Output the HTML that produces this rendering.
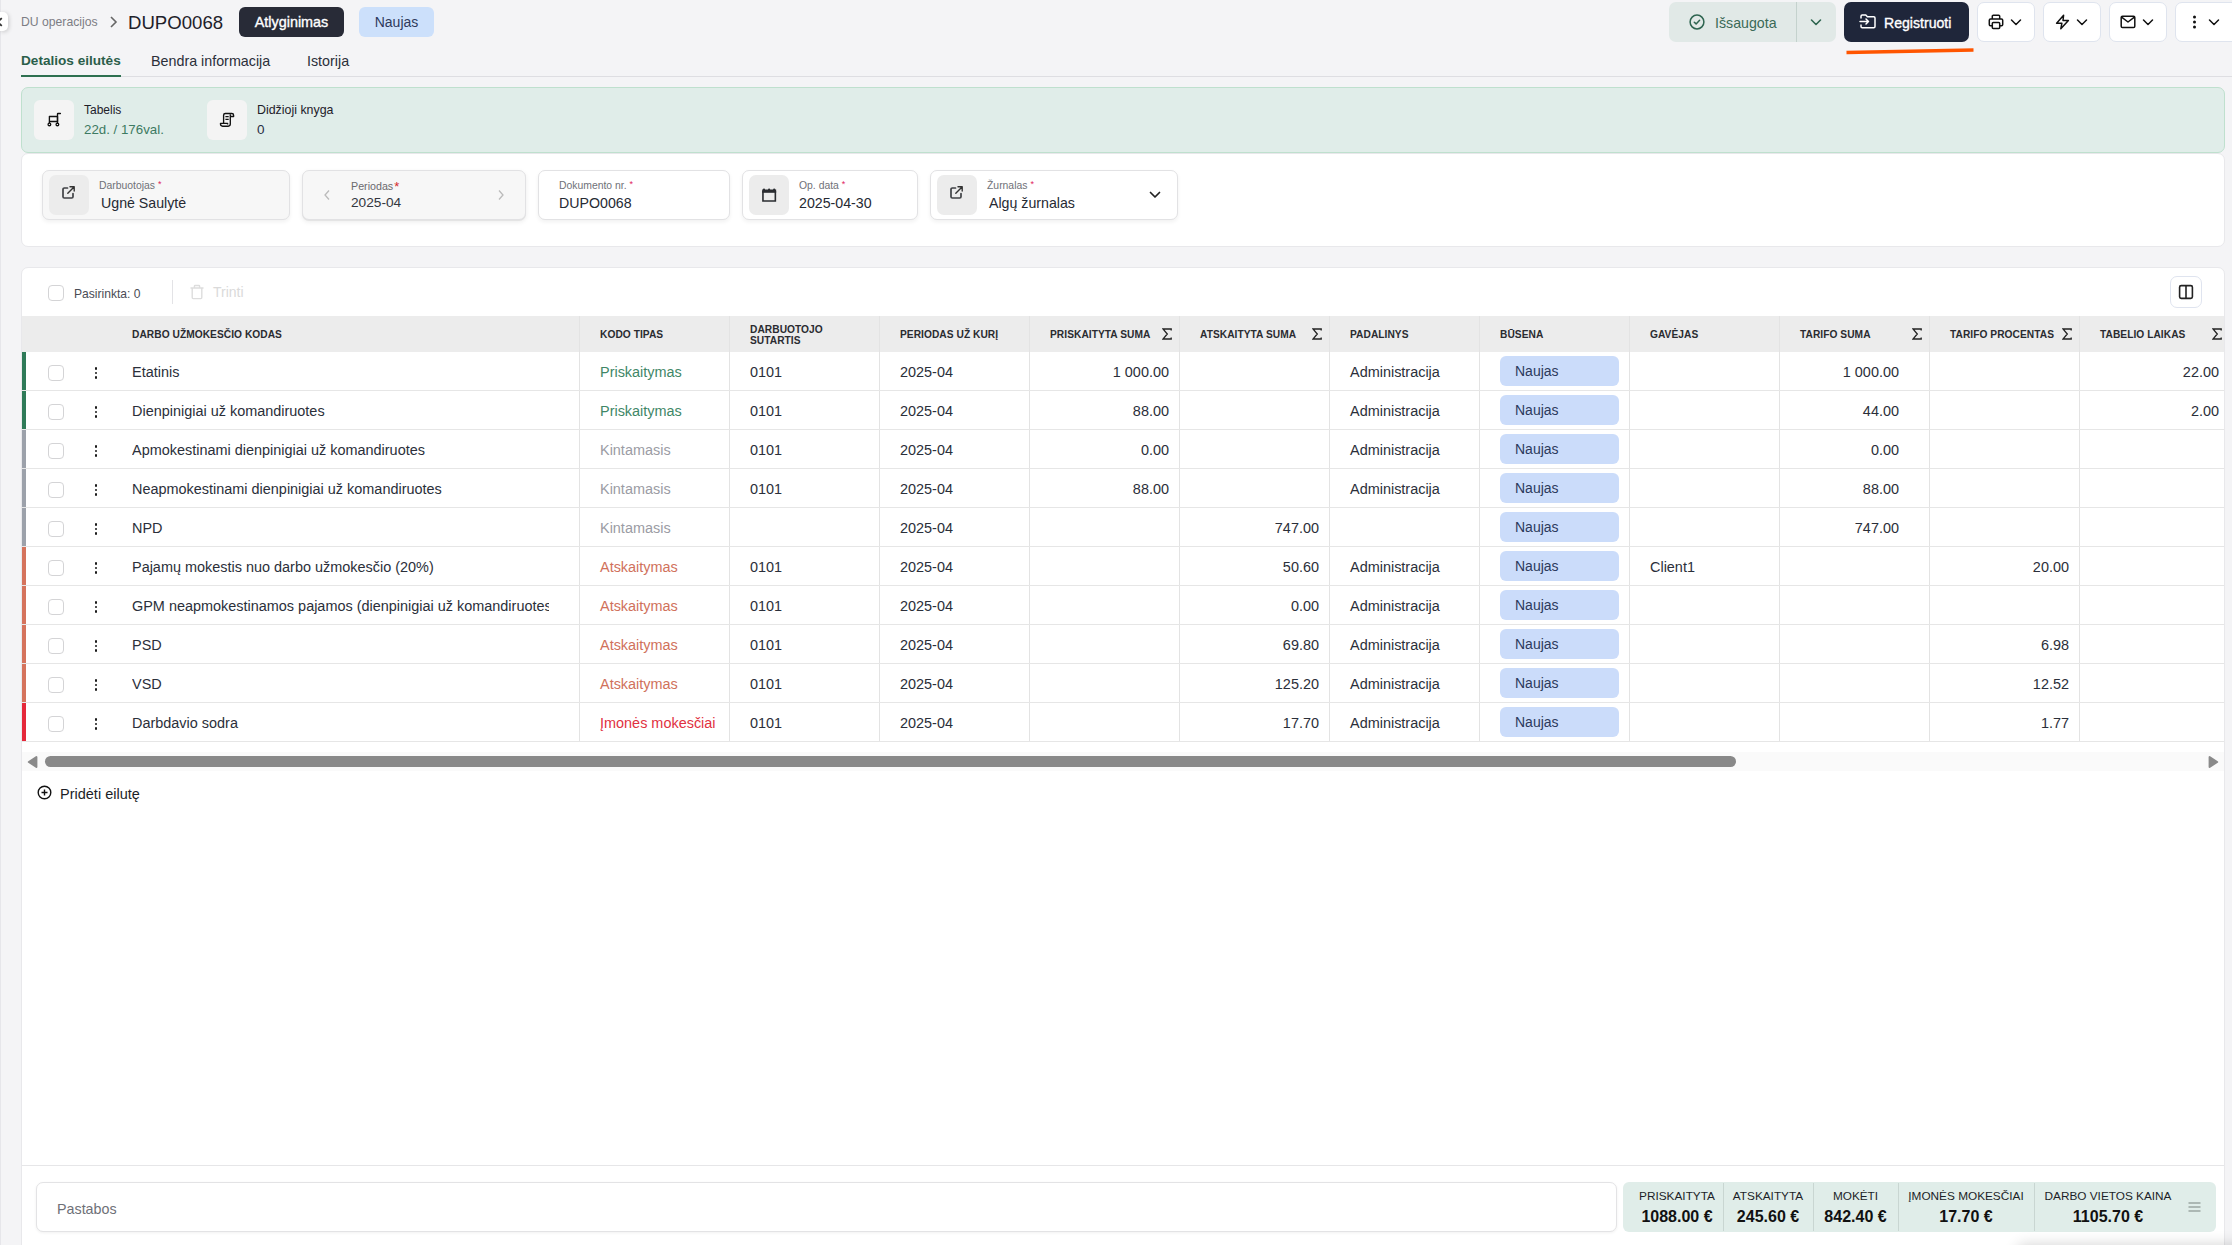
<!DOCTYPE html>
<html><head><meta charset="utf-8">
<style>
*{box-sizing:border-box;margin:0;padding:0}
html,body{width:2232px;height:1245px;overflow:hidden;background:#f4f4f6;font-family:"Liberation Sans",sans-serif;color:#262a33}
.abs{position:absolute}
.t{position:absolute;white-space:nowrap;line-height:1}
svg{display:block}
/* top */
#sidetab{left:0;top:12px;width:8px;height:19px;background:#fff;border-radius:0 5px 5px 0;box-shadow:1px 1px 4px rgba(0,0,0,.18)}
#leftline{left:0;top:0;width:1px;height:1245px;background:#e6e6ea}
.badge{position:absolute;height:30px;border-radius:6px;line-height:30px;text-align:center;white-space:nowrap}
.tab{position:absolute;top:53.6px;font-size:14.3px;line-height:14px;white-space:nowrap;color:#2b2f3a}
.btn{position:absolute;top:2px;height:40px;border-radius:7px;background:#fff;border:1px solid #dfe4ee}
.card{position:absolute;background:#fff;border:1px solid #e8e8eb;border-radius:7px}
.field{position:absolute;top:170px;height:50px;border:1px solid #e2e2e4;border-radius:7px;background:#fff;box-shadow:0 2px 4px rgba(0,0,0,.06)}
.ibox{position:absolute;left:6px;top:4px;width:40px;height:40px;border-radius:7px;background:#ececec}
.flabel{position:absolute;top:9px;font-size:10.4px;line-height:11px;color:#6f7178;white-space:nowrap}
.flabel i{font-style:normal;color:#e0245e;margin-left:3px;font-size:9px;position:relative;top:-2px}
.fval{position:absolute;top:23.5px;font-size:14.2px;line-height:16px;color:#262a33;white-space:nowrap}
/* table */
#thead{position:absolute;left:22px;top:316px;width:2202px;height:36px;background:#ececec;overflow:hidden}
.th{position:absolute;top:0;height:36px;font-size:10.2px;letter-spacing:0.05px;font-weight:bold;color:#2a2b30;line-height:11px;white-space:nowrap}
.th span{position:absolute;top:13px}
.sig{position:absolute;top:11px;font-size:14px;line-height:14px;font-weight:normal}
.vsep{position:absolute;width:1px;background:#e3e3e3}
.row{position:absolute;left:22px;width:2202px;height:39px;border-bottom:1px solid #e6e6e6;overflow:hidden}
.bar{position:absolute;left:0;top:0;width:4px;height:39px}
.cb{position:absolute;width:16px;height:16px;border:1px solid #d4d4d6;border-radius:4px;background:#fff}
.dots{position:absolute;left:72px;top:15px;width:4px;height:14px}
.dots i{position:absolute;left:0;width:2.7px;height:2.7px;border-radius:50%;background:#1a1a1a}
.c{position:absolute;top:11.5px;font-size:14.45px;line-height:16px;white-space:nowrap;color:#2b2f3a}
.r{text-align:right}
.nb{position:absolute;top:4px;width:119px;height:30px;border-radius:6px;background:#cbdcfa;color:#2c3a5c;font-size:14px;line-height:30px;padding-left:15px}
.green{color:#3f8767}.gray{color:#9b9ca4}.orange{color:#d0715b}.red{color:#e1313f}
</style></head><body>
<div id="leftline" class="abs"></div>
<div id="sidetab" class="abs"></div>
<svg class="abs" style="left:0;top:16px" width="6" height="12" viewBox="0 0 6 12"><path d="M1.8 2.2L-2.5 6l4.3 3.8" fill="none" stroke="#333" stroke-width="1.8"/></svg>

<!-- breadcrumb -->
<div class="t" style="left:21px;top:16px;font-size:12.2px;color:#7c7d84">DU operacijos</div>
<svg class="abs" style="left:108px;top:15px" width="10" height="14" viewBox="0 0 10 14"><path d="M3 2l5 5-5 5" fill="none" stroke="#666" stroke-width="1.6"/></svg>
<div class="t" style="left:128px;top:14px;font-size:18.6px;color:#1e212a">DUPO0068</div>
<div class="badge" style="left:239px;top:7px;width:105px;background:#282b37;color:#fff;font-size:14.4px;line-height:31px;-webkit-text-stroke:0.35px #fff">Atlyginimas</div>
<div class="badge" style="left:359px;top:7px;width:75px;background:#cce0fb;color:#2e3a5c;font-size:14px">Naujas</div>

<!-- tabs -->
<div class="tab" style="left:21px;font-weight:bold;font-size:13.6px;color:#2b5e4a">Detalios eilutės</div>
<div class="tab" style="left:151px">Bendra informacija</div>
<div class="tab" style="left:307px">Istorija</div>
<div class="abs" style="left:21px;top:76px;width:2211px;height:1px;background:#dedee2"></div>
<div class="abs" style="left:21px;top:75px;width:100px;height:2px;background:#2e7050"></div>


<!-- top right buttons -->
<div class="abs" style="left:1669px;top:2px;width:167px;height:40px;border-radius:7px;background:#e1e9e7"></div>
<div class="abs" style="left:1796px;top:2px;width:1px;height:40px;background:#c4d2cd"></div>
<svg class="abs" style="left:1689px;top:14px" width="16" height="16" viewBox="0 0 16 16"><circle cx="8" cy="8" r="6.9" fill="none" stroke="#2e6550" stroke-width="1.5"/><path d="M5.3 8.2l1.8 1.7 3.5-3.6" fill="none" stroke="#2e6550" stroke-width="1.5" stroke-linecap="round" stroke-linejoin="round"/></svg>
<div class="t" style="left:1715px;top:16px;font-size:14.2px;color:#3b6a57">Išsaugota</div>
<svg class="abs" style="left:1810px;top:18px" width="12" height="9" viewBox="0 0 12 9"><path d="M1.5 2l4.5 4.5 4.5-4.5" fill="none" stroke="#2e6550" stroke-width="1.6" stroke-linecap="round" stroke-linejoin="round"/></svg>

<div class="abs" style="left:1844px;top:2px;width:125px;height:40px;border-radius:7px;background:#1f263a"></div>
<svg class="abs" style="left:1859px;top:14px" width="18" height="15" viewBox="0 0 18 15"><path d="M2 4.5V2.2c0-.7.5-1.2 1.2-1.2h3.6l1.6 1.7h6.4c.7 0 1.2.5 1.2 1.2v8.7c0 .7-.5 1.2-1.2 1.2H3.2c-.7 0-1.2-.5-1.2-1.2V10.5" fill="none" stroke="#fff" stroke-width="1.5" stroke-linejoin="round"/><path d="M1 7.5h8.5M7 5l2.5 2.5L7 10" fill="none" stroke="#fff" stroke-width="1.5" stroke-linecap="round" stroke-linejoin="round"/></svg>
<div class="t" style="left:1884px;top:16px;font-size:14.1px;color:#fff;-webkit-text-stroke:0.35px #fff">Registruoti</div>
<svg class="abs" style="left:1844px;top:46px" width="132" height="10" viewBox="0 0 132 10"><path d="M2.5 6.5L129.5 4" fill="none" stroke="#ff5500" stroke-width="3.6" stroke-linecap="butt"/></svg>

<div class="btn" style="left:1977px;width:58px"></div>
<div class="btn" style="left:2043px;width:58px"></div>
<div class="btn" style="left:2109px;width:58px"></div>
<div class="btn" style="left:2175px;width:70px"></div>
<svg class="abs" style="left:1988px;top:14px" width="16" height="16" viewBox="0 0 16 16"><path d="M4.3 5V2.3c0-.6.4-1 1-1h5.4c.6 0 1 .4 1 1V5" fill="none" stroke="#111" stroke-width="1.5"/><path d="M4.2 11.7H2.4c-.6 0-1.1-.5-1.1-1.1V6.3c0-.7.6-1.3 1.3-1.3h10.8c.7 0 1.3.6 1.3 1.3v4.3c0 .6-.5 1.1-1.1 1.1h-1.8" fill="none" stroke="#111" stroke-width="1.5"/><rect x="4.3" y="8.6" width="7.4" height="5.9" rx="1" fill="none" stroke="#111" stroke-width="1.5"/></svg>
<svg class="abs" style="left:2055px;top:14px" width="15" height="16" viewBox="0 0 15 16"><path d="M8.6 1.2L1.6 9.2h5.3L5.8 14.8l7.6-8.3H8z" fill="none" stroke="#111" stroke-width="1.5" stroke-linejoin="round"/></svg>
<svg class="abs" style="left:2120px;top:15px" width="16" height="14" viewBox="0 0 16 14"><rect x="1.2" y="1.2" width="13.6" height="11.4" rx="1.3" fill="none" stroke="#111" stroke-width="1.5"/><path d="M1.6 2.2l6.4 4.8 6.4-4.8" fill="none" stroke="#111" stroke-width="1.5" stroke-linejoin="round"/></svg>
<svg class="abs" style="left:2192px;top:15px" width="5" height="14" viewBox="0 0 5 14"><circle cx="2.5" cy="2" r="1.5" fill="#111"/><circle cx="2.5" cy="7" r="1.5" fill="#111"/><circle cx="2.5" cy="12" r="1.5" fill="#111"/></svg>
<svg class="abs" style="left:2010px;top:17.5px" width="12" height="9" viewBox="0 0 12 9"><path d="M1.5 2l4.5 4.5 4.5-4.5" fill="none" stroke="#111" stroke-width="1.5" stroke-linecap="round" stroke-linejoin="round"/></svg>
<svg class="abs" style="left:2076px;top:17.5px" width="12" height="9" viewBox="0 0 12 9"><path d="M1.5 2l4.5 4.5 4.5-4.5" fill="none" stroke="#111" stroke-width="1.5" stroke-linecap="round" stroke-linejoin="round"/></svg>
<svg class="abs" style="left:2142px;top:17.5px" width="12" height="9" viewBox="0 0 12 9"><path d="M1.5 2l4.5 4.5 4.5-4.5" fill="none" stroke="#111" stroke-width="1.5" stroke-linecap="round" stroke-linejoin="round"/></svg>
<svg class="abs" style="left:2208px;top:17.5px" width="12" height="9" viewBox="0 0 12 9"><path d="M1.5 2l4.5 4.5 4.5-4.5" fill="none" stroke="#111" stroke-width="1.5" stroke-linecap="round" stroke-linejoin="round"/></svg>

<!-- info card -->
<div class="abs" style="left:21px;top:87px;width:2204px;height:66px;background:#e0ede9;border:1px solid #bfe0ce;border-radius:7px"></div>
<div class="abs" style="left:34px;top:100px;width:40px;height:40px;background:#f4f4f4;border-radius:6px"></div>
<svg class="abs" style="left:46px;top:112px" width="16" height="16" viewBox="0 0 16 16"><path d="M14.4 1.5h-2.4c-.3 0-.5.2-.5.5V11.2" fill="none" stroke="#111" stroke-width="1.35" stroke-linecap="round" stroke-linejoin="round"/><path d="M3.4 4.5h8.1v5H3.4zM3.4 9.5v1.6" fill="none" stroke="#111" stroke-width="1.35" stroke-linejoin="round"/><circle cx="3.4" cy="12.4" r="1.35" fill="none" stroke="#111" stroke-width="1.3"/><circle cx="11.4" cy="12.4" r="1.35" fill="none" stroke="#111" stroke-width="1.3"/></svg>
<div class="t" style="left:84px;top:104px;font-size:12px;color:#1e2029">Tabelis</div>
<div class="t" style="left:84px;top:122.5px;font-size:13.3px;color:#3d7a62">22d. / 176val.</div>
<div class="abs" style="left:207px;top:100px;width:40px;height:40px;background:#f4f4f4;border-radius:6px"></div>
<svg class="abs" style="left:219px;top:111px" width="16" height="17" viewBox="0 0 16 17"><path d="M4.6 12.3V4.3c0-1 .8-1.8 1.8-1.8h6.4c1 0 1.8.8 1.8 1.8v1.2h-3.2" fill="none" stroke="#111" stroke-width="1.35" stroke-linejoin="round"/><path d="M11.3 3.3v9.8c0 1.1-.9 2.1-2.1 2.1H3.6c-1.1 0-2.1-.9-2.1-2.1v-.8h7.1v1.3" fill="none" stroke="#111" stroke-width="1.35" stroke-linejoin="round"/><path d="M6.4 5.6h3.3M6.4 8.3h3.3" stroke="#111" stroke-width="1.3"/></svg>
<div class="t" style="left:257px;top:104px;font-size:12.4px;color:#1e2029">Didžioji knyga</div>
<div class="t" style="left:257px;top:122.5px;font-size:13.5px;color:#2a2f45">0</div>

<!-- fields card -->
<div class="card" style="left:21px;top:153px;width:2204px;height:94px"></div>
<div class="field" style="left:42px;width:248px;background:#f7f7f7">
  <div class="ibox"></div>
  <svg class="abs" style="left:18px;top:14px" width="15" height="15" viewBox="0 0 15 15"><path d="M6.5 3H3.3C2.6 3 2 3.6 2 4.3v7.4c0 .7.6 1.3 1.3 1.3h7.4c.7 0 1.3-.6 1.3-1.3V8.5" fill="none" stroke="#404246" stroke-width="1.7" stroke-linecap="round"/><path d="M6.8 8.2l6.2-6.2M9 1.8h4.2V6" fill="none" stroke="#333" stroke-width="1.4" stroke-linecap="round" stroke-linejoin="round"/></svg>
  <div class="flabel" style="left:56px">Darbuotojas<i>*</i></div>
  <div class="fval" style="left:58px">Ugnė Saulytė</div>
</div>
<div class="field" style="left:302px;width:224px;background:#f7f7f7;box-shadow:0 1px 0 #e4e4e4,0 2px 5px rgba(0,0,0,.08)">
  <svg class="abs" style="left:20px;top:18px" width="8" height="12" viewBox="0 0 8 12"><path d="M6 1.5L2 6l4 4.5" fill="none" stroke="#bbb" stroke-width="1.3"/></svg>
  <svg class="abs" style="left:194px;top:18px" width="8" height="12" viewBox="0 0 8 12"><path d="M2 1.5L6 6l-4 4.5" fill="none" stroke="#bbb" stroke-width="1.3"/></svg>
  <div class="flabel" style="left:48px;font-size:10.7px;color:#6a6a6e">Periodas<i style="color:#d42a2a;font-size:13px;margin-left:1px;position:relative;top:1px">*</i></div>
  <div class="fval" style="left:48px;font-size:13.7px;color:#33363e">2025-04</div>
</div>
<div class="field" style="left:538px;width:192px">
  <div class="flabel" style="left:20px">Dokumento nr.<i>*</i></div>
  <div class="fval" style="left:20px">DUPO0068</div>
</div>
<div class="field" style="left:742px;width:176px">
  <div class="ibox"></div>
  <svg class="abs" style="left:19px;top:17px" width="16" height="16" viewBox="0 0 16 16"><path d="M0.95 3v10.05h12.4V3" fill="none" stroke="#2a2c30" stroke-width="1.6"/><rect x="0.15" y="1.5" width="14" height="3.3" fill="#2a2c30"/><circle cx="2" cy="1.6" r="1.1" fill="#2a2c30"/><circle cx="7.1" cy="1.6" r="1.1" fill="#2a2c30"/><circle cx="12.2" cy="1.6" r="1.1" fill="#2a2c30"/></svg>
  <div class="flabel" style="left:56px">Op. data<i>*</i></div>
  <div class="fval" style="left:56px">2025-04-30</div>
</div>
<div class="field" style="left:930px;width:248px">
  <div class="ibox"></div>
  <svg class="abs" style="left:18px;top:14px" width="15" height="15" viewBox="0 0 15 15"><path d="M6.5 3H3.3C2.6 3 2 3.6 2 4.3v7.4c0 .7.6 1.3 1.3 1.3h7.4c.7 0 1.3-.6 1.3-1.3V8.5" fill="none" stroke="#404246" stroke-width="1.7" stroke-linecap="round"/><path d="M6.8 8.2l6.2-6.2M9 1.8h4.2V6" fill="none" stroke="#333" stroke-width="1.4" stroke-linecap="round" stroke-linejoin="round"/></svg>
  <div class="flabel" style="left:56px">Žurnalas<i>*</i></div>
  <div class="fval" style="left:58px">Algų žurnalas</div>
  <svg class="abs" style="left:218px;top:20px" width="12" height="8" viewBox="0 0 12 8"><path d="M1.5 1.5L6 6l4.5-4.5" fill="none" stroke="#222" stroke-width="1.7" stroke-linecap="round" stroke-linejoin="round"/></svg>
</div>
<!-- table card -->
<div class="card" style="left:21px;top:267px;width:2204px;height:1000px;border-radius:7px 7px 0 0"></div>
<div class="cb" style="left:48px;top:285px"></div>
<div class="t" style="left:74px;top:288px;font-size:12.1px;color:#4a4c55">Pasirinkta: 0</div>
<div class="abs" style="left:172px;top:280px;width:1px;height:24px;background:#e3e3e6"></div>
<svg class="abs" style="left:190px;top:284px" width="14" height="16" viewBox="0 0 14 16"><path d="M0.5 4h13M2.2 4v9.6c0 .6.4 1 1 1h7.6c.6 0 1-.4 1-1V4M4.4 4V2.2c0-.4.3-.7.7-.7h3.8c.4 0 .7.3.7.7V4" fill="none" stroke="#dddddd" stroke-width="1.4" stroke-linejoin="round"/></svg>
<div class="t" style="left:213px;top:285px;font-size:14px;color:#dadada">Trinti</div>
<div class="abs" style="left:2170px;top:276px;width:32px;height:32px;border:1px solid #dfe4ef;border-radius:7px;background:#fff"></div>
<svg class="abs" style="left:2178px;top:284px" width="16" height="16" viewBox="0 0 16 16"><rect x="1.6" y="1.6" width="12.8" height="12.8" rx="1.6" fill="none" stroke="#222" stroke-width="1.6"/><path d="M8 1.6v12.8" stroke="#222" stroke-width="1.6"/></svg>
<div id="thead">
<div class="th" style="left:110px"><span>DARBO UŽMOKESČIO KODAS</span></div>
<div class="th" style="left:578px"><span>KODO TIPAS</span></div>
<div class="th" style="left:728px"><span style="top:9px;line-height:10.8px">DARBUOTOJO<br>SUTARTIS</span></div>
<div class="th" style="left:878px"><span>PERIODAS UŽ KURĮ</span></div>
<div class="th" style="left:1028px"><span>PRISKAITYTA SUMA</span></div>
<svg class="abs" style="left:1140px;top:12px" width="10" height="12" viewBox="0 0 10 12"><path d="M9.2 2.6V1H1l4.3 5L1 11h8.2V9.4" fill="none" stroke="#222" stroke-width="1.3" stroke-linejoin="miter"/></svg>
<div class="th" style="left:1178px"><span>ATSKAITYTA SUMA</span></div>
<svg class="abs" style="left:1290px;top:12px" width="10" height="12" viewBox="0 0 10 12"><path d="M9.2 2.6V1H1l4.3 5L1 11h8.2V9.4" fill="none" stroke="#222" stroke-width="1.3" stroke-linejoin="miter"/></svg>
<div class="th" style="left:1328px"><span>PADALINYS</span></div>
<div class="th" style="left:1478px"><span>BŪSENA</span></div>
<div class="th" style="left:1628px"><span>GAVĖJAS</span></div>
<div class="th" style="left:1778px"><span>TARIFO SUMA</span></div>
<svg class="abs" style="left:1890px;top:12px" width="10" height="12" viewBox="0 0 10 12"><path d="M9.2 2.6V1H1l4.3 5L1 11h8.2V9.4" fill="none" stroke="#222" stroke-width="1.3" stroke-linejoin="miter"/></svg>
<div class="th" style="left:1928px"><span>TARIFO PROCENTAS</span></div>
<svg class="abs" style="left:2040px;top:12px" width="10" height="12" viewBox="0 0 10 12"><path d="M9.2 2.6V1H1l4.3 5L1 11h8.2V9.4" fill="none" stroke="#222" stroke-width="1.3" stroke-linejoin="miter"/></svg>
<div class="th" style="left:2078px"><span>TABELIO LAIKAS</span></div>
<svg class="abs" style="left:2190px;top:12px" width="10" height="12" viewBox="0 0 10 12"><path d="M9.2 2.6V1H1l4.3 5L1 11h8.2V9.4" fill="none" stroke="#222" stroke-width="1.3" stroke-linejoin="miter"/></svg>
<div class="vsep" style="left:557px;top:0;height:36px"></div>
<div class="vsep" style="left:707px;top:0;height:36px"></div>
<div class="vsep" style="left:857px;top:0;height:36px"></div>
<div class="vsep" style="left:1007px;top:0;height:36px"></div>
<div class="vsep" style="left:1157px;top:0;height:36px"></div>
<div class="vsep" style="left:1307px;top:0;height:36px"></div>
<div class="vsep" style="left:1457px;top:0;height:36px"></div>
<div class="vsep" style="left:1607px;top:0;height:36px"></div>
<div class="vsep" style="left:1757px;top:0;height:36px"></div>
<div class="vsep" style="left:1907px;top:0;height:36px"></div>
<div class="vsep" style="left:2057px;top:0;height:36px"></div>
</div>
<div class="row" style="top:352px"><div class="bar" style="background:#2f7a58"></div><div class="cb" style="left:26px;top:13px"></div><div class="dots" style="left:72.7px"><i style="top:0"></i><i style="top:4.6px"></i><i style="top:9.2px"></i></div><div class="c" style="left:110px;width:417px;overflow:hidden">Etatinis</div><div class="c green" style="left:578px">Priskaitymas</div><div class="c" style="left:728px">0101</div><div class="c" style="left:878px">2025-04</div><div class="c r" style="left:1017px;width:130px">1 000.00</div><div class="c" style="left:1328px">Administracija</div><div class="nb" style="left:1478px">Naujas</div><div class="c r" style="left:1747px;width:130px">1 000.00</div><div class="c r" style="left:2057px;width:140px">22.00</div><div class="vsep" style="left:557px;top:0;height:39px"></div><div class="vsep" style="left:707px;top:0;height:39px"></div><div class="vsep" style="left:857px;top:0;height:39px"></div><div class="vsep" style="left:1007px;top:0;height:39px"></div><div class="vsep" style="left:1157px;top:0;height:39px"></div><div class="vsep" style="left:1307px;top:0;height:39px"></div><div class="vsep" style="left:1457px;top:0;height:39px"></div><div class="vsep" style="left:1607px;top:0;height:39px"></div><div class="vsep" style="left:1757px;top:0;height:39px"></div><div class="vsep" style="left:1907px;top:0;height:39px"></div><div class="vsep" style="left:2057px;top:0;height:39px"></div></div>
<div class="row" style="top:391px"><div class="bar" style="background:#2f7a58"></div><div class="cb" style="left:26px;top:13px"></div><div class="dots" style="left:72.7px"><i style="top:0"></i><i style="top:4.6px"></i><i style="top:9.2px"></i></div><div class="c" style="left:110px;width:417px;overflow:hidden">Dienpinigiai už komandiruotes</div><div class="c green" style="left:578px">Priskaitymas</div><div class="c" style="left:728px">0101</div><div class="c" style="left:878px">2025-04</div><div class="c r" style="left:1017px;width:130px">88.00</div><div class="c" style="left:1328px">Administracija</div><div class="nb" style="left:1478px">Naujas</div><div class="c r" style="left:1747px;width:130px">44.00</div><div class="c r" style="left:2057px;width:140px">2.00</div><div class="vsep" style="left:557px;top:0;height:39px"></div><div class="vsep" style="left:707px;top:0;height:39px"></div><div class="vsep" style="left:857px;top:0;height:39px"></div><div class="vsep" style="left:1007px;top:0;height:39px"></div><div class="vsep" style="left:1157px;top:0;height:39px"></div><div class="vsep" style="left:1307px;top:0;height:39px"></div><div class="vsep" style="left:1457px;top:0;height:39px"></div><div class="vsep" style="left:1607px;top:0;height:39px"></div><div class="vsep" style="left:1757px;top:0;height:39px"></div><div class="vsep" style="left:1907px;top:0;height:39px"></div><div class="vsep" style="left:2057px;top:0;height:39px"></div></div>
<div class="row" style="top:430px"><div class="bar" style="background:#9ca1aa"></div><div class="cb" style="left:26px;top:13px"></div><div class="dots" style="left:72.7px"><i style="top:0"></i><i style="top:4.6px"></i><i style="top:9.2px"></i></div><div class="c" style="left:110px;width:417px;overflow:hidden">Apmokestinami dienpinigiai už komandiruotes</div><div class="c gray" style="left:578px">Kintamasis</div><div class="c" style="left:728px">0101</div><div class="c" style="left:878px">2025-04</div><div class="c r" style="left:1017px;width:130px">0.00</div><div class="c" style="left:1328px">Administracija</div><div class="nb" style="left:1478px">Naujas</div><div class="c r" style="left:1747px;width:130px">0.00</div><div class="vsep" style="left:557px;top:0;height:39px"></div><div class="vsep" style="left:707px;top:0;height:39px"></div><div class="vsep" style="left:857px;top:0;height:39px"></div><div class="vsep" style="left:1007px;top:0;height:39px"></div><div class="vsep" style="left:1157px;top:0;height:39px"></div><div class="vsep" style="left:1307px;top:0;height:39px"></div><div class="vsep" style="left:1457px;top:0;height:39px"></div><div class="vsep" style="left:1607px;top:0;height:39px"></div><div class="vsep" style="left:1757px;top:0;height:39px"></div><div class="vsep" style="left:1907px;top:0;height:39px"></div><div class="vsep" style="left:2057px;top:0;height:39px"></div></div>
<div class="row" style="top:469px"><div class="bar" style="background:#9ca1aa"></div><div class="cb" style="left:26px;top:13px"></div><div class="dots" style="left:72.7px"><i style="top:0"></i><i style="top:4.6px"></i><i style="top:9.2px"></i></div><div class="c" style="left:110px;width:417px;overflow:hidden">Neapmokestinami dienpinigiai už komandiruotes</div><div class="c gray" style="left:578px">Kintamasis</div><div class="c" style="left:728px">0101</div><div class="c" style="left:878px">2025-04</div><div class="c r" style="left:1017px;width:130px">88.00</div><div class="c" style="left:1328px">Administracija</div><div class="nb" style="left:1478px">Naujas</div><div class="c r" style="left:1747px;width:130px">88.00</div><div class="vsep" style="left:557px;top:0;height:39px"></div><div class="vsep" style="left:707px;top:0;height:39px"></div><div class="vsep" style="left:857px;top:0;height:39px"></div><div class="vsep" style="left:1007px;top:0;height:39px"></div><div class="vsep" style="left:1157px;top:0;height:39px"></div><div class="vsep" style="left:1307px;top:0;height:39px"></div><div class="vsep" style="left:1457px;top:0;height:39px"></div><div class="vsep" style="left:1607px;top:0;height:39px"></div><div class="vsep" style="left:1757px;top:0;height:39px"></div><div class="vsep" style="left:1907px;top:0;height:39px"></div><div class="vsep" style="left:2057px;top:0;height:39px"></div></div>
<div class="row" style="top:508px"><div class="bar" style="background:#9ca1aa"></div><div class="cb" style="left:26px;top:13px"></div><div class="dots" style="left:72.7px"><i style="top:0"></i><i style="top:4.6px"></i><i style="top:9.2px"></i></div><div class="c" style="left:110px;width:417px;overflow:hidden">NPD</div><div class="c gray" style="left:578px">Kintamasis</div><div class="c" style="left:878px">2025-04</div><div class="c r" style="left:1167px;width:130px">747.00</div><div class="nb" style="left:1478px">Naujas</div><div class="c r" style="left:1747px;width:130px">747.00</div><div class="vsep" style="left:557px;top:0;height:39px"></div><div class="vsep" style="left:707px;top:0;height:39px"></div><div class="vsep" style="left:857px;top:0;height:39px"></div><div class="vsep" style="left:1007px;top:0;height:39px"></div><div class="vsep" style="left:1157px;top:0;height:39px"></div><div class="vsep" style="left:1307px;top:0;height:39px"></div><div class="vsep" style="left:1457px;top:0;height:39px"></div><div class="vsep" style="left:1607px;top:0;height:39px"></div><div class="vsep" style="left:1757px;top:0;height:39px"></div><div class="vsep" style="left:1907px;top:0;height:39px"></div><div class="vsep" style="left:2057px;top:0;height:39px"></div></div>
<div class="row" style="top:547px"><div class="bar" style="background:#d5735c"></div><div class="cb" style="left:26px;top:13px"></div><div class="dots" style="left:72.7px"><i style="top:0"></i><i style="top:4.6px"></i><i style="top:9.2px"></i></div><div class="c" style="left:110px;width:417px;overflow:hidden">Pajamų mokestis nuo darbo užmokesčio (20%)</div><div class="c orange" style="left:578px">Atskaitymas</div><div class="c" style="left:728px">0101</div><div class="c" style="left:878px">2025-04</div><div class="c r" style="left:1167px;width:130px">50.60</div><div class="c" style="left:1328px">Administracija</div><div class="nb" style="left:1478px">Naujas</div><div class="c" style="left:1628px">Client1</div><div class="c r" style="left:1917px;width:130px">20.00</div><div class="vsep" style="left:557px;top:0;height:39px"></div><div class="vsep" style="left:707px;top:0;height:39px"></div><div class="vsep" style="left:857px;top:0;height:39px"></div><div class="vsep" style="left:1007px;top:0;height:39px"></div><div class="vsep" style="left:1157px;top:0;height:39px"></div><div class="vsep" style="left:1307px;top:0;height:39px"></div><div class="vsep" style="left:1457px;top:0;height:39px"></div><div class="vsep" style="left:1607px;top:0;height:39px"></div><div class="vsep" style="left:1757px;top:0;height:39px"></div><div class="vsep" style="left:1907px;top:0;height:39px"></div><div class="vsep" style="left:2057px;top:0;height:39px"></div></div>
<div class="row" style="top:586px"><div class="bar" style="background:#d5735c"></div><div class="cb" style="left:26px;top:13px"></div><div class="dots" style="left:72.7px"><i style="top:0"></i><i style="top:4.6px"></i><i style="top:9.2px"></i></div><div class="c" style="left:110px;width:417px;overflow:hidden">GPM neapmokestinamos pajamos (dienpinigiai už komandiruotes)</div><div class="c orange" style="left:578px">Atskaitymas</div><div class="c" style="left:728px">0101</div><div class="c" style="left:878px">2025-04</div><div class="c r" style="left:1167px;width:130px">0.00</div><div class="c" style="left:1328px">Administracija</div><div class="nb" style="left:1478px">Naujas</div><div class="vsep" style="left:557px;top:0;height:39px"></div><div class="vsep" style="left:707px;top:0;height:39px"></div><div class="vsep" style="left:857px;top:0;height:39px"></div><div class="vsep" style="left:1007px;top:0;height:39px"></div><div class="vsep" style="left:1157px;top:0;height:39px"></div><div class="vsep" style="left:1307px;top:0;height:39px"></div><div class="vsep" style="left:1457px;top:0;height:39px"></div><div class="vsep" style="left:1607px;top:0;height:39px"></div><div class="vsep" style="left:1757px;top:0;height:39px"></div><div class="vsep" style="left:1907px;top:0;height:39px"></div><div class="vsep" style="left:2057px;top:0;height:39px"></div></div>
<div class="row" style="top:625px"><div class="bar" style="background:#d5735c"></div><div class="cb" style="left:26px;top:13px"></div><div class="dots" style="left:72.7px"><i style="top:0"></i><i style="top:4.6px"></i><i style="top:9.2px"></i></div><div class="c" style="left:110px;width:417px;overflow:hidden">PSD</div><div class="c orange" style="left:578px">Atskaitymas</div><div class="c" style="left:728px">0101</div><div class="c" style="left:878px">2025-04</div><div class="c r" style="left:1167px;width:130px">69.80</div><div class="c" style="left:1328px">Administracija</div><div class="nb" style="left:1478px">Naujas</div><div class="c r" style="left:1917px;width:130px">6.98</div><div class="vsep" style="left:557px;top:0;height:39px"></div><div class="vsep" style="left:707px;top:0;height:39px"></div><div class="vsep" style="left:857px;top:0;height:39px"></div><div class="vsep" style="left:1007px;top:0;height:39px"></div><div class="vsep" style="left:1157px;top:0;height:39px"></div><div class="vsep" style="left:1307px;top:0;height:39px"></div><div class="vsep" style="left:1457px;top:0;height:39px"></div><div class="vsep" style="left:1607px;top:0;height:39px"></div><div class="vsep" style="left:1757px;top:0;height:39px"></div><div class="vsep" style="left:1907px;top:0;height:39px"></div><div class="vsep" style="left:2057px;top:0;height:39px"></div></div>
<div class="row" style="top:664px"><div class="bar" style="background:#d5735c"></div><div class="cb" style="left:26px;top:13px"></div><div class="dots" style="left:72.7px"><i style="top:0"></i><i style="top:4.6px"></i><i style="top:9.2px"></i></div><div class="c" style="left:110px;width:417px;overflow:hidden">VSD</div><div class="c orange" style="left:578px">Atskaitymas</div><div class="c" style="left:728px">0101</div><div class="c" style="left:878px">2025-04</div><div class="c r" style="left:1167px;width:130px">125.20</div><div class="c" style="left:1328px">Administracija</div><div class="nb" style="left:1478px">Naujas</div><div class="c r" style="left:1917px;width:130px">12.52</div><div class="vsep" style="left:557px;top:0;height:39px"></div><div class="vsep" style="left:707px;top:0;height:39px"></div><div class="vsep" style="left:857px;top:0;height:39px"></div><div class="vsep" style="left:1007px;top:0;height:39px"></div><div class="vsep" style="left:1157px;top:0;height:39px"></div><div class="vsep" style="left:1307px;top:0;height:39px"></div><div class="vsep" style="left:1457px;top:0;height:39px"></div><div class="vsep" style="left:1607px;top:0;height:39px"></div><div class="vsep" style="left:1757px;top:0;height:39px"></div><div class="vsep" style="left:1907px;top:0;height:39px"></div><div class="vsep" style="left:2057px;top:0;height:39px"></div></div>
<div class="row" style="top:703px"><div class="bar" style="background:#e5283a"></div><div class="cb" style="left:26px;top:13px"></div><div class="dots" style="left:72.7px"><i style="top:0"></i><i style="top:4.6px"></i><i style="top:9.2px"></i></div><div class="c" style="left:110px;width:417px;overflow:hidden">Darbdavio sodra</div><div class="c red" style="left:578px">Įmonės mokesčiai</div><div class="c" style="left:728px">0101</div><div class="c" style="left:878px">2025-04</div><div class="c r" style="left:1167px;width:130px">17.70</div><div class="c" style="left:1328px">Administracija</div><div class="nb" style="left:1478px">Naujas</div><div class="c r" style="left:1917px;width:130px">1.77</div><div class="vsep" style="left:557px;top:0;height:39px"></div><div class="vsep" style="left:707px;top:0;height:39px"></div><div class="vsep" style="left:857px;top:0;height:39px"></div><div class="vsep" style="left:1007px;top:0;height:39px"></div><div class="vsep" style="left:1157px;top:0;height:39px"></div><div class="vsep" style="left:1307px;top:0;height:39px"></div><div class="vsep" style="left:1457px;top:0;height:39px"></div><div class="vsep" style="left:1607px;top:0;height:39px"></div><div class="vsep" style="left:1757px;top:0;height:39px"></div><div class="vsep" style="left:1907px;top:0;height:39px"></div><div class="vsep" style="left:2057px;top:0;height:39px"></div></div>
<div class="abs" style="left:22px;top:752px;width:2202px;height:19px;background:#fafafa"></div>
<svg class="abs" style="left:27px;top:755px" width="11" height="14" viewBox="0 0 11 14"><path d="M9.4 2v10L1.8 7z" fill="#8a8a8a" stroke="#8a8a8a" stroke-width="2" stroke-linejoin="round"/></svg>
<div class="abs" style="left:45px;top:756px;width:1691px;height:11px;border-radius:6px;background:#898989"></div>
<svg class="abs" style="left:2208px;top:755px" width="11" height="14" viewBox="0 0 11 14"><path d="M1.6 2v10L9.2 7z" fill="#8a8a8a" stroke="#8a8a8a" stroke-width="2" stroke-linejoin="round"/></svg>
<svg class="abs" style="left:37px;top:785px" width="15" height="15" viewBox="0 0 15 15"><circle cx="7.5" cy="7.5" r="6.3" fill="none" stroke="#111" stroke-width="1.4"/><path d="M7.5 4.5v6M4.5 7.5h6" stroke="#111" stroke-width="1.4"/></svg>
<div class="t" style="left:60px;top:787px;font-size:14.5px;color:#1c1f28">Pridėti eilutę</div>
<div class="abs" style="left:22px;top:1165px;width:2202px;height:1px;background:#e6e6e8"></div>
<div class="abs" style="left:36px;top:1182px;width:1581px;height:50px;border:1px solid #e3e3e5;border-radius:7px;background:#fff;box-shadow:0 1px 3px rgba(0,0,0,.06)"></div>
<div class="t" style="left:57px;top:1202px;font-size:14.3px;color:#6e7077">Pastabos</div>
<div class="abs" style="left:1623px;top:1182px;width:593px;height:50px;border-radius:6px;background:#e0ede9"></div>
<div class="abs" style="left:1723px;top:1183px;width:1px;height:48px;background:#c9d6d2"></div>
<div class="abs" style="left:1813px;top:1183px;width:1px;height:48px;background:#c9d6d2"></div>
<div class="abs" style="left:1898px;top:1183px;width:1px;height:48px;background:#c9d6d2"></div>
<div class="abs" style="left:2034px;top:1183px;width:1px;height:48px;background:#c9d6d2"></div>
<div class="t" style="left:1631px;width:92px;text-align:center;top:1191px;font-size:11.8px;color:#1c1f28">PRISKAITYTA</div>
<div class="t" style="left:1631px;width:92px;text-align:center;top:1209px;font-size:16px;font-weight:bold;color:#111">1088.00 €</div>
<div class="t" style="left:1723px;width:90px;text-align:center;top:1191px;font-size:11.8px;color:#1c1f28">ATSKAITYTA</div>
<div class="t" style="left:1723px;width:90px;text-align:center;top:1209px;font-size:16px;font-weight:bold;color:#111">245.60 €</div>
<div class="t" style="left:1813px;width:85px;text-align:center;top:1191px;font-size:11.8px;color:#1c1f28">MOKĖTI</div>
<div class="t" style="left:1813px;width:85px;text-align:center;top:1209px;font-size:16px;font-weight:bold;color:#111">842.40 €</div>
<div class="t" style="left:1898px;width:136px;text-align:center;top:1191px;font-size:11.8px;color:#1c1f28">ĮMONĖS MOKESČIAI</div>
<div class="t" style="left:1898px;width:136px;text-align:center;top:1209px;font-size:16px;font-weight:bold;color:#111">17.70 €</div>
<div class="t" style="left:2034px;width:148px;text-align:center;top:1191px;font-size:11.8px;color:#1c1f28">DARBO VIETOS KAINA</div>
<div class="t" style="left:2034px;width:148px;text-align:center;top:1209px;font-size:16px;font-weight:bold;color:#111">1105.70 €</div>
<svg class="abs" style="left:2188px;top:1201px" width="13" height="12" viewBox="0 0 13 12"><path d="M0.5 2h12M0.5 6h12M0.5 10h12" stroke="#9ba6a2" stroke-width="1.6"/></svg>
<div class="abs" style="left:2016px;top:1247px;width:320px;height:80px;border-radius:10px;background:#fff;box-shadow:0 -3px 14px rgba(0,0,0,.16)"></div>
</body></html>
